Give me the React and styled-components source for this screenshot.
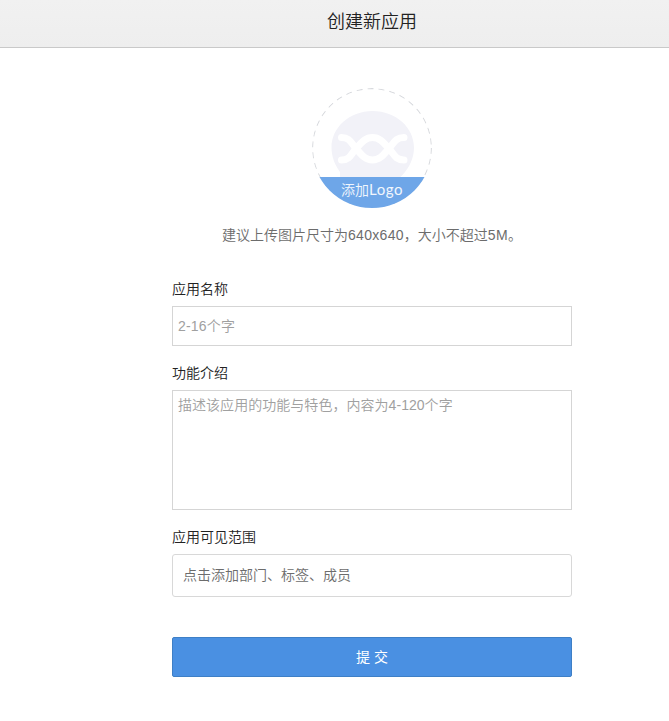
import React from "react";
import styled, { createGlobalStyle } from "styled-components";

const GlobalStyle = createGlobalStyle`
  * { box-sizing: border-box; }
  body {
    margin: 0;
    background: #fff;
    font-family: "Liberation Sans", "Noto Sans CJK SC", sans-serif;
    font-size: 14px;
    font-weight: 350;
    color: #222;
  }
  input, textarea, button { font: inherit; }
`;

const Page = styled.div`
  height: 721px;
  overflow: hidden;
`;

const Header = styled.header`
  display: flex;
  justify-content: center;
  height: 48px;
  padding: 8px 0 0 75px;
  background: linear-gradient(#f1f1f1, #eee);
  border-bottom: 1px solid #c9c9c9;
`;

const Title = styled.h1`
  margin: 0;
  font-size: 18px;
  line-height: 28px;
  font-weight: 350;
`;

const Form = styled.form`
  display: flex;
  flex-direction: column;
  width: 400px;
  margin: 40px 0 0 172px;
`;

const LogoPicker = styled.div`
  display: grid;
  align-self: center;
  width: 120px;
  height: 120px;
  border-radius: 50%;
  overflow: hidden;

  > * { grid-area: 1 / 1; }
`;

const LogoCaption = styled.span`
  align-self: end;
  z-index: 1;
  height: 31px;
  background: #6ea6e8;
  color: #f1f6fd;
  font-family: Lato, "Noto Sans CJK SC", sans-serif;
  font-size: 14px;
  line-height: 25px;
  text-align: center;
`;

const LogoLatin = styled.span`
  font-size: 15px;
  font-weight: 400;
  letter-spacing: 0.5px;
`;

const Hint = styled.p`
  margin: 17px 0 0 50px;
  line-height: 20px;
  color: #6c6c6c;
  white-space: nowrap;
`;

const HintLatin = styled.span`
  letter-spacing: 0.3px;
`;

const Label = styled.label`
  margin-top: ${(p) => p.$gap}px;
  line-height: 20px;
  margin-bottom: 7px;
`;

const TextInput = styled.input`
  width: 400px;
  height: 40px;
  padding: 0 5px;
  border: 1px solid #d5d5d5;
  background: #fff;
  letter-spacing: 0.2px;
  outline: none;
  &::placeholder { color: #a0a0a0; }
`;

const TextArea = styled.textarea`
  display: block;
  width: 400px;
  height: 120px;
  padding: 4px 5px;
  border: 1px solid #d5d5d5;
  line-height: 20px;
  letter-spacing: 0.04px;
  resize: none;
  outline: none;
  &::placeholder { color: #a0a0a0; }
`;

const Scope = styled.div`
  height: 43px;
  padding: 0 10px;
  border: 1px solid #d8d8d8;
  border-radius: 3px;
  line-height: 41px;
  color: #6c6c6c;
`;

const Submit = styled.button`
  height: 40px;
  margin-top: 40px;
  padding: 0 0 2px;
  border: 1px solid #3e7fc6;
  border-radius: 2px;
  background: #4a90e2;
  color: #fff;
  font-weight: 400;
`;

function LogoPlaceholder() {
  return (
    <svg width="120" height="120" viewBox="0 0 120 120" fill="none">
      <circle cx="60" cy="60" r="59.4" stroke="#d8dade" strokeWidth="1.1" strokeDasharray="6 5" />
      <path d="M60.500 23C37.500 23 19.500 39.500 19.500 59.500C19.500 69 23 77 28 84V100H60C84 100 102 80 102 59.500C102 39.500 84 23 60.500 23Z" fill="#f2f2f8" />
      <g stroke="#fff" strokeWidth="7" strokeLinecap="round">
        <path d="M29.500 49.500C38 49.500 39 55 44 60.500S53 72 60.500 72S72 66 77 60.500S83 49.500 92 49.500" />
        <path d="M29.500 72C38 72 39 66 44 60.500S53 49.500 60.500 49.500S72 55 77 60.500S83 72 92 72" />
      </g>
    </svg>
  );
}

export default function App() {
  return (
    <>
      <GlobalStyle />
      <Page>
        <Header>
          <Title>创建新应用</Title>
        </Header>
        <Form onSubmit={(e) => e.preventDefault()}>
          <LogoPicker>
            <LogoPlaceholder />
            <LogoCaption>
              添加<LogoLatin>Logo</LogoLatin>
            </LogoCaption>
          </LogoPicker>
          <Hint>
            建议上传图片尺寸为<HintLatin>640x640</HintLatin>{"\uFF0C"}大小不超过<HintLatin>5M</HintLatin>。
          </Hint>
          <Label $gap={34} htmlFor="name">应用名称</Label>
          <TextInput id="name" placeholder="2-16个字" />
          <Label $gap={17} htmlFor="intro">功能介绍</Label>
          <TextArea id="intro" placeholder={"描述该应用的功能与特色\uFF0C内容为4-120个字"} />
          <Label $gap={17} as="div">应用可见范围</Label>
          <Scope>点击添加部门、标签、成员</Scope>
          <Submit>提 交</Submit>
        </Form>
      </Page>
    </>
  );
}
